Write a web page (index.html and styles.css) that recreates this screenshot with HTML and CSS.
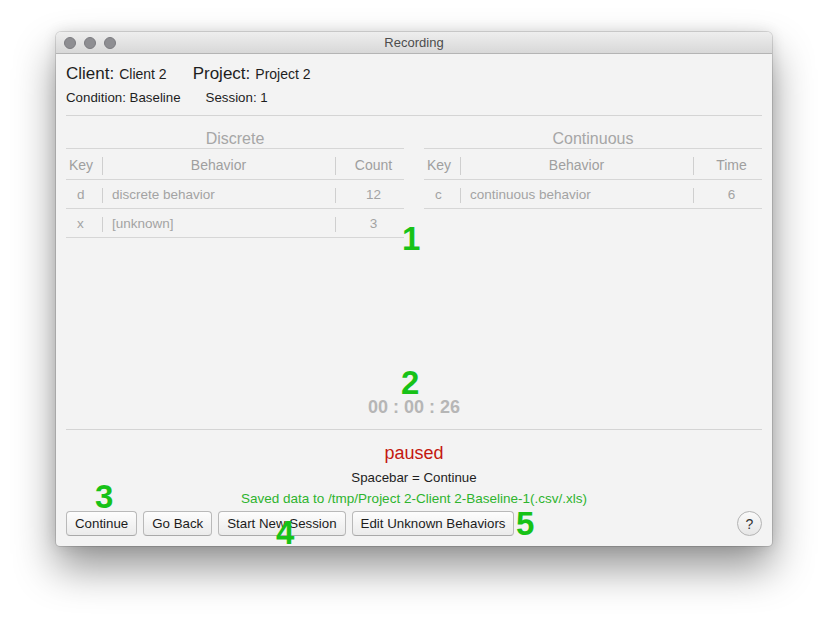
FILE: index.html
```html
<!DOCTYPE html>
<html>
<head>
<meta charset="utf-8">
<title>Recording</title>
<link rel="stylesheet" href="styles.css">
</head>
<body>
<div class="window">
  <div class="titlebar">
    <div class="lights">
      <span class="light"></span>
      <span class="light"></span>
      <span class="light"></span>
    </div>
    <div class="title">Recording</div>
    <div></div>
  </div>
  <div class="content">
    <div class="info-main">
      <span class="label">Client:</span>
      <span class="value">Client 2</span>
      <span class="label gap">Project:</span>
      <span class="value">Project 2</span>
    </div>
    <div class="info-sub">
      <span>Condition: Baseline</span>
      <span>Session: 1</span>
    </div>
    <div class="sep"></div>
    <div class="tables">
      <section class="table">
        <div class="table-title">Discrete</div>
        <div class="row head">
          <div class="c-key">Key</div>
          <div class="c-beh">Behavior</div>
          <div class="c-num">Count</div>
        </div>
        <div class="row">
          <div class="c-key">d</div>
          <div class="c-beh">discrete behavior</div>
          <div class="c-num">12</div>
        </div>
        <div class="row">
          <div class="c-key">x</div>
          <div class="c-beh">[unknown]</div>
          <div class="c-num">3</div>
        </div>
      </section>
      <section class="table">
        <div class="table-title">Continuous</div>
        <div class="row head">
          <div class="c-key">Key</div>
          <div class="c-beh">Behavior</div>
          <div class="c-num">Time</div>
        </div>
        <div class="row">
          <div class="c-key">c</div>
          <div class="c-beh">continuous behavior</div>
          <div class="c-num">6</div>
        </div>
      </section>
    </div>
    <div class="spacer"></div>
    <div class="timer">00 : 00 : 26</div>
    <div class="sep sep-lower"></div>
    <div class="status">paused</div>
    <div class="hint">Spacebar = Continue</div>
    <div class="saved">Saved data to /tmp/Project 2-Client 2-Baseline-1(.csv/.xls)</div>
    <div class="actions">
      <button class="btn">Continue</button>
      <button class="btn">Go Back</button>
      <button class="btn">Start New Session</button>
      <button class="btn">Edit Unknown Behaviors</button>
      <button class="help">?</button>
    </div>
  </div>
</div>
<div class="marker m1">1</div>
<div class="marker m2">2</div>
<div class="marker m3">3</div>
<div class="marker m4">4</div>
<div class="marker m5">5</div>
</body>
</html>
```

FILE: styles.css
```css
html, body {
  margin: 0;
  padding: 0;
  background: #ffffff;
}

body {
  position: relative;
  width: 828px;
  height: 627px;
  overflow: hidden;
  font-family: "Liberation Sans", Arial, sans-serif;
  color: #222;
}

.window {
  margin: 32px 0 0 56px;
  width: 716px;
  height: 514px;
  display: flex;
  flex-direction: column;
  border-radius: 5px 5px 4px 4px;
  overflow: hidden;
  background: #f3f3f3;
  box-shadow: 0 22px 42px rgba(0, 0, 0, 0.42), 0 0 14px rgba(0, 0, 0, 0.12), 0 0 0 1px rgba(0, 0, 0, 0.12);
}

.titlebar {
  height: 21px;
  border-bottom: 1px solid #b4b4b4;
  background: linear-gradient(#eeeeee, #d8d8d8);
  display: grid;
  grid-template-columns: 1fr auto 1fr;
  align-items: center;
}

.lights {
  display: flex;
  gap: 8px;
  padding-left: 8px;
}

.light {
  width: 12px;
  height: 12px;
  box-sizing: border-box;
  border-radius: 50%;
  background: #8e8e92;
  border: 1px solid #7c7c80;
}

.title {
  font-size: 13px;
  color: #4d4d4d;
  line-height: 21px;
}

.content {
  flex: 1;
  display: flex;
  flex-direction: column;
  padding: 10px 10px 10px;
}

.info-main {
  display: flex;
  align-items: baseline;
  height: 20px;
  line-height: 20px;
  color: #1e1e1e;
}

.label {
  font-size: 17px;
}

.value {
  font-size: 14px;
  margin-left: 5px;
}

.label.gap {
  margin-left: 26px;
}

.info-sub {
  display: flex;
  gap: 25px;
  margin-top: 6px;
  font-size: 13.3px;
  line-height: 16px;
  color: #1e1e1e;
}

.sep {
  height: 1px;
  background: #d4d4d4;
  margin-top: 9px;
}

.tables {
  display: grid;
  grid-template-columns: 1fr 1fr;
  column-gap: 20px;
}

.table-title {
  padding-top: 14px;
  line-height: 18px;
  font-size: 16px;
  text-align: center;
  color: #a6a6a6;
  border-bottom: 1px solid #d6d6d6;
}

.row {
  display: grid;
  grid-template-columns: 36px 1fr 69px;
  height: 26px;
  padding-top: 2px;
  line-height: 26px;
  font-size: 13.5px;
  color: #a3a3a3;
  border-bottom: 1px solid #d6d6d6;
}

.row.head {
  height: 27px;
  padding-top: 3px;
  line-height: 27px;
  font-size: 14px;
  color: #9f9f9f;
}

.row > div {
  white-space: nowrap;
  overflow: hidden;
}

.c-key {
  padding-left: 11px;
}

.head .c-key {
  padding-left: 3px;
}

.c-beh,
.c-num {
  background: linear-gradient(#cfcfcf, #cfcfcf) no-repeat left center / 1px 15px;
}

.head .c-beh,
.head .c-num {
  background-size: 1px 18px;
}

.c-beh {
  padding-left: 10px;
}

.head .c-beh {
  padding-left: 0;
  text-align: center;
}

.c-num {
  padding-left: 8px;
  text-align: center;
}

.spacer {
  flex: 1;
}

.timer {
  text-align: center;
  font-size: 18px;
  font-weight: bold;
  line-height: 20px;
  color: #b6b6b6;
  margin-bottom: 12px;
}

.sep-lower {
  margin-top: 0;
}

.status {
  margin-top: 12px;
  text-align: center;
  font-size: 18px;
  line-height: 22px;
  color: #c4180f;
  margin-bottom: 6px;
}

.hint {
  text-align: center;
  font-size: 13.3px;
  line-height: 16px;
  color: #1e1e1e;
  margin-bottom: 5px;
}

.saved {
  text-align: center;
  font-size: 13.5px;
  line-height: 16px;
  color: #2eb42e;
  margin-bottom: 4px;
}

.actions {
  display: flex;
  align-items: center;
  gap: 6px;
  height: 25px;
}

.btn {
  height: 25px;
  box-sizing: border-box;
  padding: 0 8px;
  font-family: "Liberation Sans", Arial, sans-serif;
  font-size: 13.3px;
  color: #1c1c1c;
  background: linear-gradient(#fdfdfd, #ebebeb);
  border: 1px solid #b9b9b9;
  border-bottom-color: #a9a9a9;
  border-radius: 4px;
}

.help {
  margin-left: auto;
  width: 25px;
  height: 25px;
  box-sizing: border-box;
  padding: 0;
  border-radius: 50%;
  border: 1px solid #b4b4b4;
  background: linear-gradient(#fafafa, #e6e6e6);
  font-family: "Liberation Sans", Arial, sans-serif;
  font-size: 14px;
  color: #333;
}

.marker {
  position: absolute;
  font-family: "Liberation Sans", Arial, sans-serif;
  font-weight: bold;
  font-size: 33px;
  line-height: 24px;
  color: #17c217;
}

.m1 { left: 402px; top: 227px; }
.m2 { left: 401px; top: 371px; }
.m3 { left: 95px; top: 485px; }
.m4 { left: 276px; top: 521px; }
.m5 { left: 516px; top: 512px; }
```
